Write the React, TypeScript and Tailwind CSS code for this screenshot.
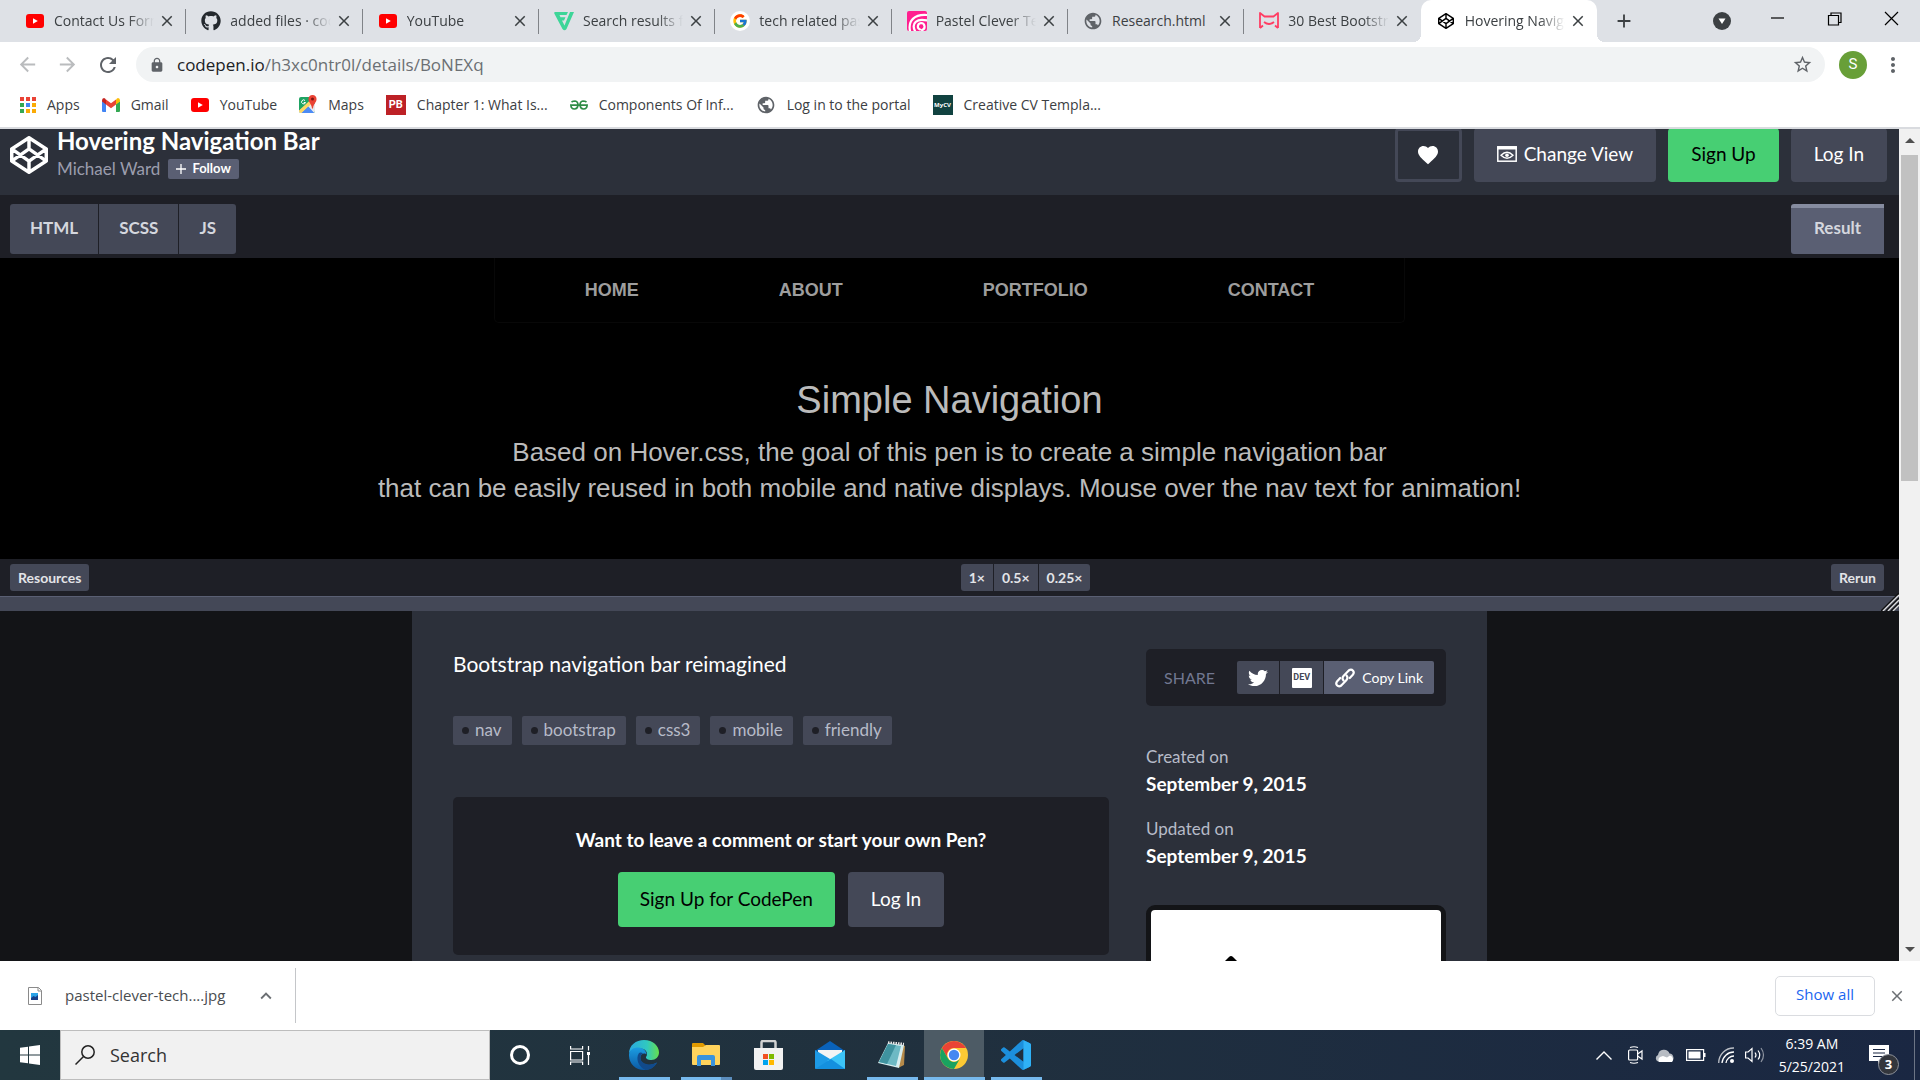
import React from "react";
import { FaGithub, FaTwitter } from "react-icons/fa";
import { FcGoogle } from "react-icons/fc";
import {
  MdPublic, MdLock, MdRefresh, MdArrowBack, MdArrowForward, MdStarBorder, MdMoreVert,
  MdClose, MdAdd, MdFavorite, MdKeyboardArrowUp,
} from "react-icons/md";

type IconProps = { className?: string };

const YouTubeIcon = ({ className = "" }: IconProps) => (
  <svg viewBox="0 0 18 14" className={"h-[14px] w-[18px] " + className} aria-hidden="true">
    <rect width="18" height="14" rx="3" fill="#f00" />
    <path d="M7 4.2v5.6L11.8 7z" fill="#fff" />
  </svg>
);

const CodePenIcon = ({ className = "" }: IconProps) => (
  <svg viewBox="1 1 22 22" className={className} fill="none" stroke="currentColor" strokeWidth="2" strokeLinejoin="round" strokeLinecap="round" aria-hidden="true">
    <path d="M12 2l10 6.5v7L12 22 2 15.5v-7zM12 22v-6.5M22 8.5l-10 7-10-7M2 15.5l10-7 10 7M12 2v6.5" />
  </svg>
);

const VectorIcon = () => (
  <svg viewBox="0 0 20 20" className="size-5" fill="#3dd598" aria-hidden="true">
    <path d="M1 1h13l-1.500 3H5.500l1 2.300h5L10 9.500H8l2.500 5L16 1h4l-7.500 17q-2 2.500-4 0L.3 2.600Q0 1 1 1z" />
  </svg>
);

const SpiralIcon = () => (
  <svg viewBox="0 0 20 20" className="size-5" aria-hidden="true">
    <rect width="20" height="20" rx="2" fill="#ff1f8f" />
    <path d="M3 20C1 10 7 3 20 4M8 20C4 12 10 7 20 9.500M13 18.500c-3-1-3-6 1-6.500 4 0 5 6 1 7" fill="none" stroke="#fff" strokeWidth="2.200" strokeLinecap="round" />
  </svg>
);

const RibbonIcon = () => (
  <svg viewBox="0 0 20 20" className="size-5" fill="none" stroke="#ff3d63" strokeWidth="1.800" strokeLinejoin="round" aria-hidden="true">
    <path d="M1 17V2l4.500 3.500h9L19 2v15M1 17l3-2.500M19 17l-3-2.500M5 11q5 4 10 0" />
  </svg>
);

const AppsIcon = () => (
  <svg viewBox="0 0 16 16" className="size-4" aria-hidden="true">
    <path d="M0 0h4v4H0zM6 0h4v4H6zM12 0h4v4h-4z" fill="#ea4335" />
    <path d="M0 6h4v4H0zM0 12h4v4H0z" fill="#34a853" />
    <path d="M6 6h4v4H6z" fill="#4285f4" />
    <path d="M12 6h4v4h-4zM6 12h4v4H6zM12 12h4v4h-4z" fill="#fbab05" />
  </svg>
);

const GmailIcon = () => (
  <svg viewBox="0 0 18 14" className="h-[14px] w-[18px]" aria-hidden="true">
    <path d="M0 3v10q0 1 1 1h3V6z" fill="#4285f4" />
    <path d="M18 3v10q0 1-1 1h-3V6z" fill="#34a853" />
    <path d="M4 1.500L9 5.300l5-3.800V6.500L9 10.300 4 6.500z" fill="#ea4335" />
    <path d="M0 2.500Q0 0 2 0q1 0 2 1.500v5L0 3.500z" fill="#c5221f" />
    <path d="M18 2.500Q18 0 16 0q-1 0-2 1.500v5l4-3z" fill="#fbbc04" />
  </svg>
);

const MapsIcon = () => (
  <svg viewBox="0 0 18 20" className="h-5 w-[18px]" aria-hidden="true">
    <rect y="2" width="16" height="16" rx="2" fill="#1fa463" />
    <path d="M0 16L12 5l4 4v7q0 2-2 2H2q-2 0-2-2z" fill="#e8eaed" />
    <path d="M2 18l7-7 6 7z" fill="#4c8bf5" />
    <path d="M0 15.500L12.500 4l2.500 2.500L2.500 18Q0 18 0 15.500z" fill="#fdd663" />
    <path d="M3 18l6-6 6 6z" fill="#4c8bf5" />
    <path d="M13.500 0a4 4 0 0 1 4 4.500c0 3-3 4-3.500 9h-1c-.5-5-3.500-6-3.500-9a4 4 0 0 1 4-4.500z" fill="#ea4335" />
    <circle cx="13.500" cy="4" r="1.500" fill="#811411" />
    <path d="M6 5.500a2 2 0 1 0 .5 2H4.800" fill="none" stroke="#fff" strokeWidth="1" />
  </svg>
);

const GeeksIcon = () => (
  <svg viewBox="0 0 18 10" className="h-[10px] w-[18px]" fill="none" stroke="#2f8d46" strokeWidth="1.700" aria-hidden="true">
    <path d="M1.500 2Q3 1 5 1q3 .5 3 4.200Q7.500 9 4.500 9 1 8.800.9 5.200h16.200Q17 8.800 13.500 9 10.500 9 10 5.200 10 1.500 13 1q2 0 3.500 1" />
  </svg>
);

const Tile = ({ tone, children }: { tone: string; children: React.ReactNode }) => (
  <span className={"flex size-5 items-center justify-center overflow-hidden font-bold text-white " + tone}>{children}</span>
);

const tabs = [
  { title: "Contact Us Form", icon: <YouTubeIcon /> },
  { title: "added files · codepen", icon: <FaGithub className="size-5 text-[#24292e]" /> },
  { title: "YouTube", icon: <YouTubeIcon /> },
  { title: "Search results f", icon: <VectorIcon /> },
  { title: "tech related pastel", icon: <span className="flex size-5 items-center justify-center rounded-full bg-white"><FcGoogle className="size-4" /></span> },
  { title: "Pastel Clever Tech", icon: <SpiralIcon /> },
  { title: "Research.html", icon: <MdPublic className="size-5 text-[#5f6368]" /> },
  { title: "30 Best Bootstrap", icon: <RibbonIcon /> },
  { title: "Hovering Navigation", icon: <CodePenIcon className="size-4 text-black" />, active: true },
];

const bookmarks = [
  { label: "Apps", icon: <AppsIcon /> },
  { label: "Gmail", icon: <GmailIcon /> },
  { label: "YouTube", icon: <YouTubeIcon /> },
  { label: "Maps", icon: <MapsIcon /> },
  { label: "Chapter 1: What Is...", icon: <Tile tone="bg-[#bd2126] font-['Roboto'] text-[11px]">PB</Tile> },
  { label: "Components Of Inf...", icon: <GeeksIcon /> },
  { label: "Log in to the portal", icon: <MdPublic className="size-5 text-[#5f6368]" /> },
  { label: "Creative CV Templa...", icon: <Tile tone="bg-[#114240] text-[6px]">MyCV</Tile> },
];

function TabStrip() {
  return (
    <div className="flex h-[42px] shrink-0 bg-[#dee1e6] pl-[10px]">
      <div role="tablist" className="grid w-[1587px] min-w-0 grid-cols-9">
        {tabs.map((t, i) => (
          <div
            key={i}
            role="tab"
            aria-selected={!!t.active}
            className={
              "relative flex min-w-0 items-center pr-[10px] pl-[15px] " +
              (t.active
                ? "rounded-t-[10px] bg-white before:absolute before:bottom-0 before:-left-2 before:size-2 before:bg-[radial-gradient(circle_at_0_0,transparent_8px,white_8px)] after:absolute after:-right-2 after:bottom-0 after:size-2 after:bg-[radial-gradient(circle_at_100%_0,transparent_8px,white_8px)]"
                : "")
            }
          >
            <span className="flex w-5 shrink-0 justify-center">{t.icon}</span>
            <span className={"ml-[9px] h-5 min-w-0 flex-1 overflow-hidden text-sm/5 whitespace-nowrap text-[#3c4043] " + (t.title === "Research.html" ? "" : "[mask-image:linear-gradient(to_right,black_74%,transparent)]")}>
              {t.title}
            </span>
            <button aria-label={"Close " + t.title} className="ml-1 text-[#3c4043]"><MdClose className="size-[18px]" /></button>
            {!t.active && i < tabs.length - 2 && <span className="absolute right-0 h-[25px] w-px bg-[#808388]" />}
          </div>
        ))}
      </div>
      <button aria-label="New tab" className="ml-4 text-[#3c4043]"><MdAdd className="size-[22px]" /></button>
      <div className="flex-1" />
      <button aria-label="Search tabs" className="mr-[18px] text-[#3c4043]">
        <svg viewBox="0 0 18 18" className="size-[18px]"><circle cx="9" cy="9" r="9" fill="currentColor" /><path d="M5.500 6.500h7L9 12z" fill="#fff" /></svg>
      </button>
      {[
        { n: "Minimize", d: "M0 6h13" },
        { n: "Restore", d: "M.5 3.500h10v9.500H.5zM3 3.500V1h10v9.500h-2.500" },
        { n: "Close window", d: "M0 0l13 13M13 0L0 13" },
      ].map((b) => (
        <button key={b.n} aria-label={b.n} className="flex h-[37px] w-[57px] items-center justify-center">
          <svg viewBox="-1 -1 15 15" className="size-[15px]" fill="none" stroke="#000" strokeWidth="1.200"><path d={b.d} /></svg>
        </button>
      ))}
    </div>
  );
}

function Toolbar() {
  return (
    <div className="flex h-[45px] shrink-0 items-center pr-[15px] pl-4">
      <button aria-label="Back" className="text-[#babcbe]"><MdArrowBack className="size-[23px]" /></button>
      <button aria-label="Forward" className="ml-[17px] text-[#babcbe]"><MdArrowForward className="size-[23px]" /></button>
      <button aria-label="Reload" className="ml-[17px] text-[#5f6368]"><MdRefresh className="size-6" /></button>
      <div className="ml-4 flex h-[35px] flex-1 items-center rounded-full bg-[#f1f3f4] pr-3 pl-[13px] text-[17px]">
        <MdLock className="size-4 text-[#5f6368]" />
        <label htmlFor="address" className="ml-3 text-[#202124]">codepen.io</label>
        <input id="address" defaultValue="/h3xc0ntr0l/details/BoNEXq" className="min-w-0 flex-1 bg-transparent text-[#6b6f73] outline-none" />
        <button aria-label="Bookmark this page" className="text-[#5f6368]"><MdStarBorder className="size-[21px]" /></button>
      </div>
      <button aria-label="Profile" className="ml-[14px] flex size-7 items-center justify-center rounded-full bg-[#689f38] font-['Roboto'] text-[15px] text-white">S</button>
      <button aria-label="Menu" className="ml-[14px] text-[#5f6368]"><MdMoreVert className="size-6" /></button>
    </div>
  );
}

function Bookmarks() {
  return (
    <nav aria-label="Bookmarks" className="flex h-[42px] shrink-0 items-start gap-[22px] border-b-2 border-[#d9dbdf] pt-2 pl-5 text-sm/5 text-[#3c4043]">
      {bookmarks.map((b) => (
        <a key={b.label} href="#" className="flex items-center gap-[11px] whitespace-nowrap">
          {b.icon}
          {b.label}
        </a>
      ))}
    </nav>
  );
}

const grayBtn = "flex h-[54px] items-center rounded-[4px] bg-[#444857] pb-0.5 text-white";

function PenHeader() {
  return (
    <header className="flex h-[66px] items-start overflow-hidden bg-[#2c303a] pr-3 pl-[10px]">
      <a href="#" aria-label="CodePen" className="mt-[7px] text-white"><CodePenIcon className="size-[38px]" /></a>
      <div className="ml-[9px]">
        <h1 className="text-2xl/6 font-bold text-white">Hovering Navigation Bar</h1>
        <div className="flex items-center">
          <a href="#" className="text-[17px]/8 text-[#9b9dad]">Michael Ward</a>
          <button className="ml-2 flex h-5 items-center gap-[6px] rounded-[2px] bg-[#5a5f73] px-[8px] text-[13px] font-bold text-white">
            <svg viewBox="0 0 10 10" className="size-[10px]" stroke="#fff" strokeWidth="1.300"><path d="M5 0v10M0 5h10" /></svg>
            Follow
          </button>
        </div>
      </div>
      <div className="-mt-px ml-auto flex gap-3 text-[19px]">
        <button aria-label="Love this pen" className="flex h-[54px] w-[67px] items-center justify-center rounded-[4px] border-[3px] border-[#444857] text-white">
          <MdFavorite className="size-6" />
        </button>
        <button className={grayBtn + " gap-[7px] px-[23px]"}>
          <svg viewBox="0 0 20 16" className="h-4 w-5" fill="none" stroke="#fff">
            <rect x=".8" y=".8" width="18.400" height="14.400" strokeWidth="1.500" />
            <path d="M0 2h20" strokeWidth="3" />
            <path d="M4 9.200q6-6 12 0-6 6-12 0z" strokeWidth="1.400" />
            <circle cx="10" cy="9.200" r="1.800" fill="#fff" stroke="none" />
          </svg>
          Change View
        </button>
        <a href="#" className="flex h-[54px] items-center rounded-[4px] bg-[#47cf73] px-[23px] pb-0.5 text-black">Sign Up</a>
        <a href="#" className={grayBtn + " px-[23px]"}>Log In</a>
      </div>
    </header>
  );
}

function Preview() {
  return (
    <section className="bg-black font-['Liberation_Sans',sans-serif]">
      <nav className="mx-auto flex h-[65px] w-[911px] max-w-full justify-center gap-[140px] rounded-b-[5px] border border-t-0 border-[#080808] pt-5 text-lg/6 font-bold text-[#9d9d9d]">
        {["HOME", "ABOUT", "PORTFOLIO", "CONTACT"].map((n) => <a key={n} href="#">{n}</a>)}
      </nav>
      <div className="pt-[54px] pb-[53px] text-center text-[#bbb]">
        <h2 className="text-[38px]/[46px]">Simple Navigation</h2>
        <p className="pt-[11px] text-[26px]/9">
          Based on Hover.css, the goal of this pen is to create a simple navigation bar<br />
          that can be easily reused in both mobile and native displays. Mouse over the nav text for animation!
        </p>
      </div>
    </section>
  );
}

const smallBtn = "flex h-[27px] items-center bg-[#444857] text-[14px] font-bold text-[#e3e4e8] px-2";
const editorTab = "h-[50px] bg-[#444857] px-5 pb-0.5";

function Editor() {
  return (
    <>
      <div className="flex items-start justify-between bg-[#1e1f26] pt-[9px] pr-[15px] pb-1 pl-[10px] text-[17px] font-bold text-[#d5d7de]">
        <div className="flex gap-px overflow-hidden rounded-[3px]">
          <button className={editorTab}>HTML</button>
          <button className={editorTab}>SCSS</button>
          <button className={editorTab}>JS</button>
        </div>
        <button className="h-[50px] min-w-[93px] rounded-l-[3px] border-t-4 border-[#868ca0] bg-[#5a5f73] px-5 pb-[6px]">Result</button>
      </div>
      <Preview />
      <div className="flex h-[37px] items-center bg-[#1e1f26] pr-[15px] pl-[10px]">
        <button className={smallBtn + " rounded-[3px]"}>Resources</button>
        <div className="grow-20" />
        <div className="flex gap-px overflow-hidden rounded-[3px]">
          <button className={smallBtn}>1×</button>
          <button className={smallBtn}>0.5×</button>
          <button className={smallBtn}>0.25×</button>
        </div>
        <div className="grow-17" />
        <button className={smallBtn + " rounded-[3px]"}>Rerun</button>
      </div>
      <div className="relative h-[15px] border-t border-[#5a5f73] bg-[#444857]">
        <svg viewBox="0 0 18 18" className="absolute right-0 bottom-0 size-[18px]" strokeWidth="1.300">
          <path d="M0 18L18 0M5 18L18 5M10 18l8-8" stroke="#111" />
          <path d="M2 18L18 2M7 18L18 7M12 18l6-6" stroke="#ddd" />
        </svg>
      </div>
    </>
  );
}

function Details() {
  return (
    <div className="flex flex-1 justify-center bg-[#131417]">
      <main className="flex w-[1075px] gap-[37px] bg-[#2c303a] px-[41px]">
        <div className="min-w-0 flex-1 pt-[39px]">
          <p className="text-[21px]/7 text-white">Bootstrap navigation bar reimagined</p>
          <ul className="mt-[38px] flex gap-[10px] text-[17px] text-[#b7bbc8]">
            {["nav", "bootstrap", "css3", "mobile", "friendly"].map((t) => (
              <li key={t}>
                <a href="#" className="flex h-[29px] items-center gap-[6px] rounded-[2px] bg-[#444857] pr-[10px] pb-px pl-[9px]">
                  <span className="size-[7px] rounded-full bg-[#1e1f26]" />
                  {t}
                </a>
              </li>
            ))}
          </ul>
          <section className="mt-[52px] rounded-[5px] bg-[#1e1f26] pt-[29px] pb-7 text-center">
            <h3 className="text-[19px]/7 font-bold text-white">Want to leave a comment or start your own Pen?</h3>
            <div className="mt-[18px] flex justify-center gap-[13px] text-[19px]">
              <a href="#" className="flex h-[55px] items-center rounded-[4px] bg-[#47cf73] px-[22px] pb-px text-black">Sign Up for CodePen</a>
              <a href="#" className="flex h-[55px] items-center rounded-[4px] bg-[#444857] px-[23px] pb-px text-white">Log In</a>
            </div>
          </section>
        </div>
        <aside className="w-[300px] pt-[38px]">
          <div className="flex h-[57px] items-center justify-between rounded-[5px] bg-[#1e1f26] pr-3 pl-[18px]">
            <span className="text-base text-[#717790]">SHARE</span>
            <div className="flex gap-px overflow-hidden rounded-[2px] text-white">
              <button aria-label="Share on Twitter" className="flex h-[33px] w-[42px] items-center justify-center bg-[#444857]"><FaTwitter className="size-5" /></button>
              <button aria-label="Share on DEV" className="flex h-[33px] w-[43px] items-center justify-center bg-[#444857]">
                <span className="flex size-5 items-center justify-center rounded-[1px] bg-white font-['Roboto'] text-[9px] font-bold text-[#444857]">DEV</span>
              </button>
              <button className="flex h-[33px] items-center gap-[7px] bg-[#5a5f73] px-[11px] text-sm">
                <svg viewBox="0 0 20 20" className="size-5" fill="none" stroke="#fff" strokeWidth="2.200" strokeLinecap="round">
                  <path d="M8.500 12.500Q6.500 10 8.700 7.700l5-5.200q2.500-1.800 4.300.2 1.600 2-.2 4.100l-3 3.200" />
                  <path d="M11.500 7.500q2 2.500-.2 4.800l-5 5.200q-2.500 1.800-4.300-.2-1.600-2 .2-4.100l3-3.200" />
                </svg>
                Copy Link
              </button>
            </div>
          </div>
          <dl className="mt-[37px] text-lg/[27px]">
            <dt className="text-[17px] text-[#b7bbc8]">Created on</dt>
            <dd className="text-[19px] font-bold text-white">September 9, 2015</dd>
            <dt className="mt-[18px] text-[17px] text-[#b7bbc8]">Updated on</dt>
            <dd className="text-[19px] font-bold text-white">September 9, 2015</dd>
          </dl>
          <div className="mt-9 h-[260px] rounded-[9px] border-[5px] border-[#131417] bg-white pt-[45px] pl-[70px]">
            <svg viewBox="0 0 20 10" className="h-[10px] w-5"><path d="M0 10L8 2q2-2 4 0l8 8z" fill="#000" /></svg>
          </div>
        </aside>
      </main>
    </div>
  );
}

function Scrollbar() {
  return (
    <div className="flex w-[21px] flex-col items-center bg-[#f1f1f1] py-[9px]" aria-hidden="true">
      <svg viewBox="0 0 10 5" className="h-[5px] w-[10px]"><path d="M0 5l5-5 5 5z" fill="#505050" /></svg>
      <div className="mt-3 h-[326px] w-[17px] bg-[#c1c1c1]" />
      <svg viewBox="0 0 10 5" className="mt-auto h-[5px] w-[10px]"><path d="M0 0l5 5 5-5z" fill="#505050" /></svg>
    </div>
  );
}

function Downloads() {
  return (
    <div className="flex h-[69px] shrink-0 items-center bg-white">
      <div className="flex h-[55px] w-[296px] items-center border-r border-[#c4c6c9] pl-7">
        <svg viewBox="0 0 14 18" className="h-[18px] w-[14px]">
          <path d="M.5.5h10l3 3v14H.5z" fill="#fff" stroke="#8a8a8a" />
          <path d="M10 .5V4h3.500" fill="none" stroke="#8a8a8a" />
          <path d="M3 6h7v7H3z" fill="#2aa3e8" />
          <path d="M3 11l2.500-2 2 1L10 8v5H3z" fill="#173f8a" />
        </svg>
        <span className="ml-[23px] text-[15px] text-[#4a4d51]">pastel-clever-tech....jpg</span>
        <button aria-label="Download options" className="mr-[18px] ml-auto text-[#6b6f73]"><MdKeyboardArrowUp className="size-[22px]" /></button>
      </div>
      <button className="ml-auto flex h-10 items-center rounded-[5px] border border-[#dadce0] px-5 pb-0.5 text-[15px] text-[#1a66f0]">Show all</button>
      <button aria-label="Close downloads" className="mr-[14px] ml-[13px] text-[#6b6f73]"><MdClose className="size-[18px]" /></button>
    </div>
  );
}

const EdgeIcon = () => (
  <svg viewBox="0 0 30 30" className="size-[30px]">
    <defs>
      <linearGradient id="eg" x1="0" x2="1"><stop offset="0" stopColor="#2aa9e0" /><stop offset=".6" stopColor="#30c8c0" /><stop offset="1" stopColor="#66e04c" /></linearGradient>
      <linearGradient id="eb" x1="0" y1="0" x2="0" y2="1"><stop offset="0" stopColor="#1b9de2" /><stop offset="1" stopColor="#0c59a4" /></linearGradient>
    </defs>
    <path d="M0 14C0 5 7 0 15 0c9 0 15 6 15 12.500 0 4.500-3.500 7.500-7.500 7.500-4 0-6-1.500-5.500-3 2-2 1.500-8-5-8.500C6 8 1 10 0 14z" fill="url(#eg)" />
    <path d="M0 14c1-4.500 5-6.500 9-6.500 6 0 8.500 4 8.500 7-1-1.500-5-2-6 2-1.500 7 7 11.500 16.500 6C25 27.500 21 30 15 30 6 30-.5 23 0 14z" fill="url(#eb)" />
    <path d="M10 13c-4 6 0 14 6.500 17 6-.5 9.500-3.500 11.500-7.500-9.500 5-18-.5-16.500-6 .3-1.500 1.500-2.500 2.500-3q-2-1.500-4-.5z" fill="#114a8b" />
  </svg>
);
const FolderIcon = () => (
  <svg viewBox="0 0 28 24" className="h-6 w-7">
    <path d="M0 1q0-1 1-1h10l3 3-3 3H0z" fill="#e19a00" />
    <path d="M0 4h11l3-2h13q1 0 1 1v18q0 1-1 1H1q-1 0-1-1z" fill="#ffd35c" />
    <path d="M5 23V14q0-2 2-2h14q2 0 2 2v9h-4v-6H9v6z" fill="#3a93dc" />
  </svg>
);
const StoreIcon = () => (
  <svg viewBox="0 0 29 30" className="h-[30px] w-[29px]">
    <path d="M7.500 9V2.500q0-1.500 1.500-1.500h11q1.500 0 1.500 1.500V9" fill="none" stroke="#d2d2d2" strokeWidth="2.500" />
    <path d="M0 8h29v20q0 2-2 2H2q-2 0-2-2z" fill="#f2f2f2" />
    <path d="M9 14h5v5H9z" fill="#f25022" /><path d="M15 14h5v5h-5z" fill="#7fba00" />
    <path d="M9 20h5v5H9z" fill="#00a4ef" /><path d="M15 20h5v5h-5z" fill="#ffb900" />
  </svg>
);
const MailIcon = () => (
  <svg viewBox="0 0 30 28" className="h-7 w-[30px]">
    <path d="M0 10L15 0l15 10z" fill="#0a62ba" />
    <path d="M3 9h24v9H3z" fill="#f4f4f4" />
    <path d="M0 9l20 12 10-12v18q0 1-1 1H1q-1 0-1-1z" fill="#1d9ae6" />
    <path d="M3 9h24L16 17z" fill="#f4f4f4" />
    <path d="M30 9L12 20l18 8z" fill="#3cc4f7" />
    <path d="M0 28l16-10 14 10z" fill="#1490df" />
  </svg>
);
const NotepadIcon = () => (
  <svg viewBox="0 0 28 28" className="size-7">
    <path d="M24 4l3 1-1 19-6 3z" fill="#b58a4a" />
    <path d="M10 2l16 2-5 23L0 22z" fill="#d7eef0" />
    <path d="M10 3l13 2-5 20L1 21z" fill="#6db9c4" />
    <path d="M10 3l8 1-9 19-8-2z" fill="#3f929f" />
    <path d="M10 1.500l16 1.500" stroke="#e8e8e8" strokeWidth="2.500" strokeDasharray="1.500 1" />
  </svg>
);
const ChromeIcon = () => (
  <svg viewBox="0 0 28 28" className="size-7">
    <circle cx="14" cy="14" r="14" fill="#fcc934" />
    <path d="M1.900 7A14 14 0 0 1 26.100 7H14a7 7 0 0 0-6.500 9.500z" fill="#e94335" />
    <path d="M1.900 7A14 14 0 0 0 14 28l6-10.500a7 7 0 0 1-12 0z" fill="#1aa260" />
    <circle cx="14" cy="14" r="6.500" fill="#fff" />
    <circle cx="14" cy="14" r="5.200" fill="#4688f1" />
  </svg>
);
const CodeIcon = () => (
  <svg viewBox="0 0 24 24" className="size-[30px]">
    <path fill="#1c8fdc" d="M23.150 2.587L18.210.210a1.494 1.494 0 0 0-1.705.290l-9.460 8.630-4.120-3.128a.999.999 0 0 0-1.276.057L.327 7.261A1 1 0 0 0 .326 8.740L3.899 12 .326 15.260a1 1 0 0 0 .001 1.479L1.650 17.940a.999.999 0 0 0 1.276.057l4.120-3.128 9.460 8.630a1.492 1.492 0 0 0 1.704.290l4.942-2.377A1.500 1.500 0 0 0 24 20.060V3.939a1.500 1.500 0 0 0-.850-1.352zm-5.146 14.861L10.826 12l7.178-5.448v10.896z" />
    <path fill="#2fb1f6" d="M18 .15l5.150 2.437A1.500 1.500 0 0 1 24 3.940v16.120a1.500 1.500 0 0 1-.85 1.352L18 23.850z" />
  </svg>
);

const apps = [
  { name: "Microsoft Edge", icon: <EdgeIcon />, bar: "w-[51px]" },
  { name: "File Explorer", icon: <FolderIcon />, bar: "w-[51px] border-r-[11px] border-[#5b8dbd]" },
  { name: "Microsoft Store", icon: <StoreIcon /> },
  { name: "Mail", icon: <MailIcon /> },
  { name: "Notepad", icon: <NotepadIcon />, bar: "w-[51px]" },
  { name: "Google Chrome", icon: <ChromeIcon />, bar: "w-[61px]", active: true },
  { name: "Visual Studio Code", icon: <CodeIcon />, bar: "w-[51px]" },
];

function Taskbar() {
  return (
    <footer className="flex h-[50px] shrink-0 items-stretch bg-linear-to-r from-[#22373f] via-[#20303e] to-[#1a2742] text-white">
      <button aria-label="Start" className="flex w-[60px] items-center justify-center">
        <svg viewBox="0 0 20 20" className="size-5" fill="#fff"><path d="M0 2.800l8-1.100v7.800H0zM9 1.500L20 0v9.500H9zM0 10.500h8v7.800l-8-1.100zM9 10.500h11V20L9 18.500z" /></svg>
      </button>
      <label className="flex w-[430px] items-center border border-[#bdbdbd] bg-[#f1f1f1] pl-[14px]">
        <svg viewBox="0 0 20 20" className="size-5" fill="none" stroke="#222" strokeWidth="1.500"><circle cx="13" cy="7" r="6.200" /><path d="M8.500 11.500L.5 19.500" /></svg>
        <input aria-label="Search" defaultValue="Search" className="ml-[15px] w-80 bg-transparent text-lg text-[#333] outline-none" />
      </label>
      <button aria-label="Cortana" className="flex w-[60px] items-center justify-center">
        <span className="size-5 rounded-full border-[3px] border-white" />
      </button>
      <button aria-label="Task view" className="flex w-[63px] items-center justify-center pr-[3px]">
        <svg viewBox="0 0 20 19" className="h-[19px] w-5" fill="none" stroke="#fff" strokeWidth="1.200">
          <path d="M.6 5.500h12v8.500H.6zM.6 0v3h12V0M.6 19v-3h12v3M18.500 0v4.500M18.500 9v10" />
          <path d="M17 6h3v3h-3z" fill="#fff" stroke="none" />
        </svg>
      </button>
      {apps.map((a) => (
        <button key={a.name} aria-label={a.name} className={"relative flex w-[62px] items-center justify-center border-x border-transparent bg-clip-padding " + (a.active ? "bg-[#4d5b65]" : "")}>
          {a.icon}
          {a.bar && <span className={"absolute bottom-0 h-[3px] bg-[#76b9ed] " + a.bar} />}
        </button>
      ))}
      <div className="ml-auto flex items-center pr-[5px]">
        <svg viewBox="0 0 16 9" className="h-[9px] w-4" fill="none" stroke="#fff" strokeWidth="1.400"><path d="M.5 8.500L8 1l7.500 7.500" /></svg>
        <svg viewBox="0 0 15 18" className="ml-4 h-[18px] w-[15px]" fill="none" stroke="#fff" strokeWidth="1.200"><rect x=".6" y="4" width="9" height="10" rx="1" /><path d="M9.600 8l4.400-3v8l-4.400-3M2 1.500q4-1.500 8 0M2 16.500q4 1.500 8 0" /></svg>
        <svg viewBox="0 0 20 13" className="ml-3 h-[13px] w-5"><path d="M3 12.500a3.500 3.500 0 0 1 0-6.500 6 6 0 0 1 11.500-1.500A4.500 4.500 0 0 1 16 13z" fill="#b7bcc3" /><path d="M4 13a4 4 0 0 1 1-5l3-1 4 1.500 3-2a4 4 0 0 1 2 6.500z" fill="#fff" /></svg>
        <svg viewBox="0 0 20 12" className="ml-[11px] h-3 w-5"><rect x=".6" y=".6" width="17" height="10.800" fill="none" stroke="#fff" strokeWidth="1.200" /><path d="M2.500 2.500h12v7h-12zM18 4h1.500v4H18z" fill="#fff" /></svg>
        <svg viewBox="0 0 16 16" className="ml-3 size-4" fill="none" stroke="#fff" strokeWidth="1.300"><path d="M.7 16A15 15 0 0 1 16 1" opacity=".7" /><path d="M4 16A12 12 0 0 1 16 5M8 16a8 8 0 0 1 8-7" /><circle cx="14" cy="14" r="2" fill="#fff" stroke="none" /></svg>
        <svg viewBox="0 0 20 16" className="ml-[11px] h-4 w-5" fill="none" stroke="#fff" strokeWidth="1.200"><path d="M.6 5h2.500L7 1.500v13L3.100 11H.6zM10 5.500q2 2.500 0 5M13 3.500q3.500 4.500 0 9" /><path d="M16 1q5 7 0 14" opacity=".5" /></svg>
        <div className="ml-[14px] text-center text-[14px]/[23px]">
          <div>6:39 AM</div>
          <div>5/25/2021</div>
        </div>
        <button aria-label="Notifications" className="relative ml-6 flex h-[50px] w-[46px] items-center border-r border-[#6c7585]">
          <svg viewBox="0 0 20 20" className="size-5"><path d="M0 0h20v16h-7l-4 4v-4H0z" fill="#fff" /><path d="M4 4.500h12M4 8h12M4 11.500h12" stroke="#1a2742" strokeWidth="1.200" /></svg>
          <span className="absolute top-[24px] left-[9px] flex size-[21px] items-center justify-center rounded-full border border-[#8d9199] bg-[#33363c] text-[13px] font-bold">3</span>
        </button>
      </div>
    </footer>
  );
}

export default function App() {
  return (
    <div className="flex h-screen flex-col overflow-hidden bg-white font-['Open_Sans',sans-serif]">
      <TabStrip />
      <Toolbar />
      <Bookmarks />
      <div className="flex min-h-0 flex-1">
        <div className="flex min-w-0 flex-1 flex-col overflow-hidden font-['Lato',sans-serif] *:shrink-0">
          <PenHeader />
          <Editor />
          <Details />
        </div>
        <Scrollbar />
      </div>
      <Downloads />
      <Taskbar />
    </div>
  );
}
